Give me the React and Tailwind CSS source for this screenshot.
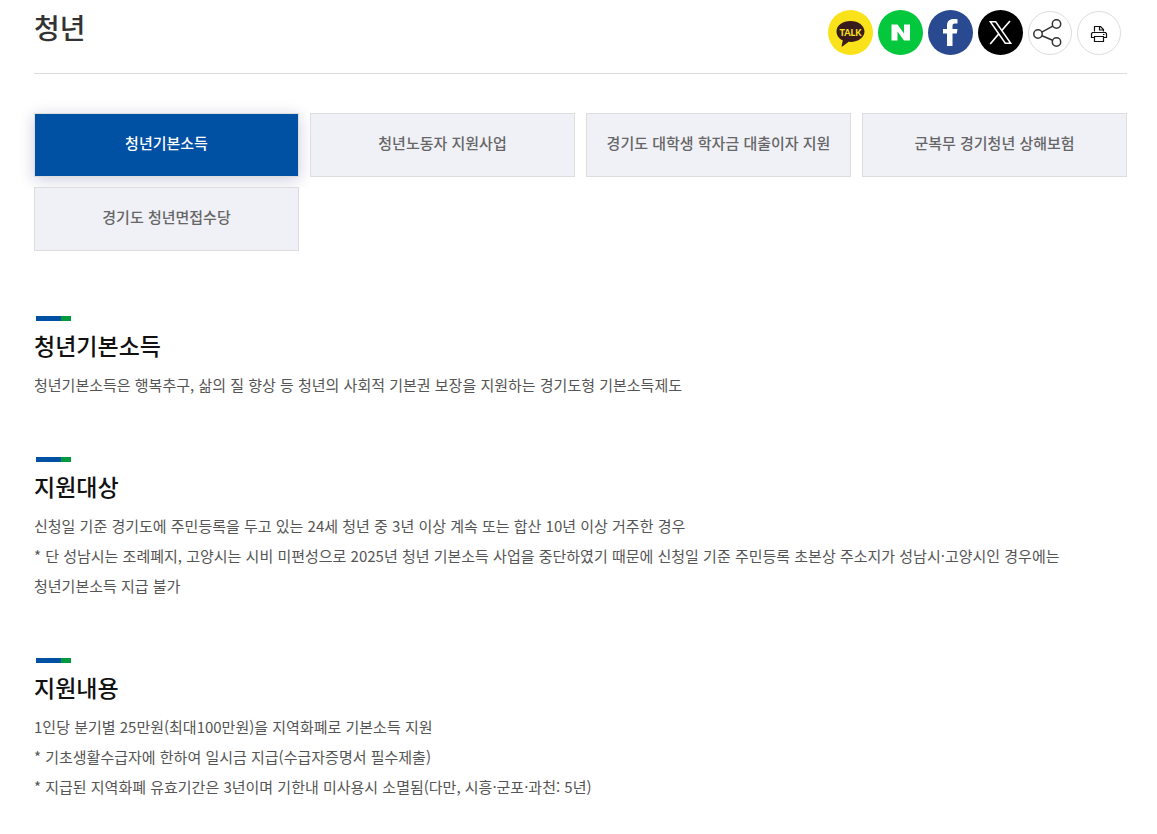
import { useState } from "react";

const TABS = [
  "청년기본소득",
  "청년노동자 지원사업",
  "경기도 대학생 학자금 대출이자 지원",
  "군복무 경기청년 상해보험",
  "경기도 청년면접수당",
];

const SECTIONS = [
  {
    title: "청년기본소득",
    lines: ["청년기본소득은 행복추구, 삶의 질 향상 등 청년의 사회적 기본권 보장을 지원하는 경기도형 기본소득제도"],
  },
  {
    title: "지원대상",
    lines: [
      "신청일 기준 경기도에 주민등록을 두고 있는 24세 청년 중 3년 이상 계속 또는 합산 10년 이상 거주한 경우",
      "* 단 성남시는 조례폐지, 고양시는 시비 미편성으로 2025년 청년 기본소득 사업을 중단하였기 때문에 신청일 기준 주민등록 초본상 주소지가 성남시·고양시인 경우에는 청년기본소득 지급 불가",
    ],
  },
  {
    title: "지원내용",
    lines: [
      "1인당 분기별 25만원(최대100만원)을 지역화폐로 기본소득 지원",
      "* 기초생활수급자에 한하여 일시금 지급(수급자증명서 필수제출)",
      "* 지급된 지역화폐 유효기간은 3년이며 기한내 미사용시 소멸됨(다만, 시흥·군포·과천: 5년)",
    ],
  },
];

function KakaoIcon() {
  return (
    <svg viewBox="0 0 45 45" className="size-full" aria-hidden="true">
      <path
        d="M22.500 11C14.500 11 8.500 15.600 8.500 21.500c0 4 2.600 7.300 6.300 9.100l-1.200 5.400c-.1.500.4.800.8.500l6.300-4.700c.6.100 1.200.1 1.800.1 8 0 14-4.600 14-10.400S30.500 11 22.500 11z"
        fill="#391b1b"
      />
      <text
        x="22.500"
        y="25.500"
        textAnchor="middle"
        fontFamily="Lato, 'Liberation Sans', sans-serif"
        fontSize="9"
        fontWeight="900"
        fill="#f9e21a"
      >
        TALK
      </text>
    </svg>
  );
}

function NaverIcon() {
  return (
    <svg viewBox="0 0 45 45" className="size-full" aria-hidden="true">
      <path d="M13.500 14.500h6l6.500 9v-9h6v16h-6l-6.500-9v9h-6z" fill="#fff" />
    </svg>
  );
}

function FacebookIcon() {
  return (
    <svg viewBox="0 0 45 45" className="size-full" aria-hidden="true">
      <path
        d="M19 36V23.500h-4v-4.500h4v-3.500C19 11.200 21.500 9 25.500 9c1.700 0 3 .1 4 .3v4.200h-2.600c-2 0-2.400 1-2.400 2.500v3h5l-.7 4.500h-4.300V36z"
        fill="#fff"
      />
    </svg>
  );
}

function XIcon() {
  return (
    <svg viewBox="0 0 45 45" className="size-full" fill="none" stroke="#fff" aria-hidden="true">
      <path d="M12.300 11.800h5.400l15 21.400h-5.400z" strokeWidth="1.500" />
      <path d="M32 11 23.500 20.800M20.900 23.800 12.200 34" strokeWidth="1.700" />
    </svg>
  );
}

function ShareIcon() {
  return (
    <svg viewBox="1 1 42 42" className="size-full" fill="none" stroke="#333" strokeWidth="1.500" aria-hidden="true">
      <circle cx="10" cy="23" r="4.200" />
      <circle cx="28.500" cy="13" r="4.200" />
      <circle cx="28.500" cy="31" r="4.200" />
      <path d="m13.800 21.100 11-6M14 24.700l10.600 4.500" />
    </svg>
  );
}

function PrintIcon() {
  return (
    <svg viewBox="1 1 42 42" className="size-full" fill="none" stroke="#111" strokeWidth="1.200" aria-hidden="true">
      <path d="M17.500 20.500v-5h6l3 3v2M22.500 15.500v3.500h4" />
      <path d="M17.500 26.500h-3v-4l1-1h13l1 1v4h-3" />
      <path d="M17.500 25.500h9v5h-9z" />
      <path d="M26 23.500h1.500" />
    </svg>
  );
}

const SHARE_LINKS = [
  { label: "카카오톡 공유", Icon: KakaoIcon, style: "size-[45px] bg-[#f9e21a]" },
  { label: "네이버 공유", Icon: NaverIcon, style: "size-[45px] bg-[#03c73c]" },
  { label: "페이스북 공유", Icon: FacebookIcon, style: "size-[45px] bg-[#294a90]" },
  { label: "X 공유", Icon: XIcon, style: "size-[45px] bg-black" },
  { label: "공유하기", Icon: ShareIcon, style: "size-11 border border-[#ddd] bg-white" },
  { label: "인쇄", Icon: PrintIcon, style: "size-11 border border-[#ddd] bg-white" },
];

function Section({ title, lines }) {
  return (
    <section>
      <div className="ml-0.5 flex h-[5px]" aria-hidden="true">
        <span className="w-[25px] bg-[#0050a4]" />
        <span className="w-[10px] bg-[#009a3e]" />
      </div>
      <h2 className="mt-1.5 text-[23px] leading-9 font-medium text-[#111]">{title}</h2>
      <div className="mt-[7px] text-[15px] leading-[30px] text-[#555]">
        {lines.map((line) => (
          <p key={line}>{line}</p>
        ))}
      </div>
    </section>
  );
}

export default function App() {
  const [activeTab, setActiveTab] = useState(0);

  return (
    <main
      lang="ko"
      className="bg-white pr-[30px] pb-8 pl-[34px] font-['Noto_Sans_CJK_KR',sans-serif] break-keep"
    >
      <header className="flex items-start justify-between border-b border-[#ddd] pt-2.5 pb-[18px]">
        <h1 className="text-[28px] leading-[34px] font-medium text-[#333]">청년</h1>
        <div className="flex items-center gap-[5px] pr-1.5">
          {SHARE_LINKS.map(({ label, Icon, style }) => (
            <button
              key={label}
              type="button"
              aria-label={label}
              className={`overflow-hidden rounded-full ${style}`}
            >
              <Icon />
            </button>
          ))}
        </div>
      </header>

      <nav className="mt-[39px] grid grid-cols-4 gap-x-[11px] gap-y-2.5">
        {TABS.map((tab, index) => (
          <a
            key={tab}
            href="#"
            onClick={(event) => {
              event.preventDefault();
              setActiveTab(index);
            }}
            className={`flex h-16 items-center justify-center border border-[#ddd] pb-1 text-[15px] font-medium ${
              index === activeTab
                ? "bg-[#0050a4] text-white shadow-[0_3px_15px_rgba(0,0,100,0.2)]"
                : "bg-[#f0f1f7] text-[#666]"
            }`}
          >
            {tab}
          </a>
        ))}
      </nav>

      <div className="mt-[65px] flex flex-col gap-[57px]">
        {SECTIONS.map((section) => (
          <Section key={section.title} {...section} />
        ))}
      </div>
    </main>
  );
}
